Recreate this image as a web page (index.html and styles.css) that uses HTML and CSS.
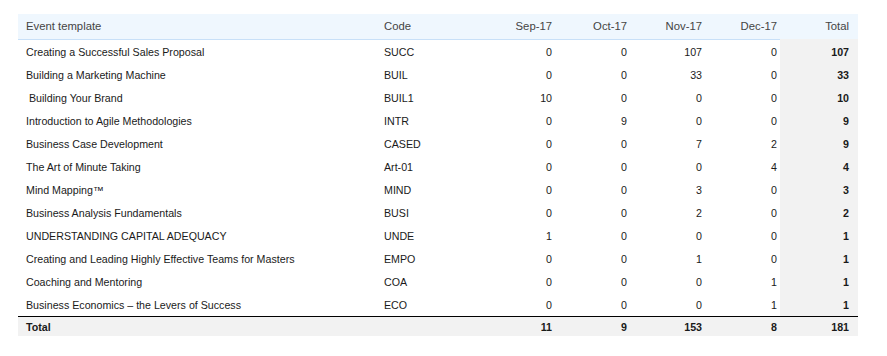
FILE: index.html
```html
<!DOCTYPE html>
<html lang="en">
<head>
    <meta charset="UTF-8">
    <title>Event template report</title>
    <link rel="stylesheet" href="styles.css">
</head>
<body>
    <div class="report">
        <table class="report-table">
            <colgroup>
                <col class="col-name">
                <col class="col-code">
                <col class="col-month">
                <col class="col-month">
                <col class="col-month">
                <col class="col-month">
                <col class="col-total">
            </colgroup>
            <thead>
                <tr>
                    <th class="name">Event template</th>
                    <th class="code">Code</th>
                    <th class="num">Sep-17</th>
                    <th class="num">Oct-17</th>
                    <th class="num">Nov-17</th>
                    <th class="num">Dec-17</th>
                    <th class="total">Total</th>
                </tr>
            </thead>
            <tbody>
                <tr><td class="name">Creating a Successful Sales Proposal</td><td class="code">SUCC</td><td class="num">0</td><td class="num">0</td><td class="num">107</td><td class="num">0</td><td class="total">107</td></tr>
                <tr><td class="name">Building a Marketing Machine</td><td class="code">BUIL</td><td class="num">0</td><td class="num">0</td><td class="num">33</td><td class="num">0</td><td class="total">33</td></tr>
                <tr><td class="name">&nbsp;Building Your Brand</td><td class="code">BUIL1</td><td class="num">10</td><td class="num">0</td><td class="num">0</td><td class="num">0</td><td class="total">10</td></tr>
                <tr><td class="name">Introduction to Agile Methodologies</td><td class="code">INTR</td><td class="num">0</td><td class="num">9</td><td class="num">0</td><td class="num">0</td><td class="total">9</td></tr>
                <tr><td class="name">Business Case Development</td><td class="code">CASED</td><td class="num">0</td><td class="num">0</td><td class="num">7</td><td class="num">2</td><td class="total">9</td></tr>
                <tr><td class="name">The Art of Minute Taking</td><td class="code">Art-01</td><td class="num">0</td><td class="num">0</td><td class="num">0</td><td class="num">4</td><td class="total">4</td></tr>
                <tr><td class="name">Mind Mapping™</td><td class="code">MIND</td><td class="num">0</td><td class="num">0</td><td class="num">3</td><td class="num">0</td><td class="total">3</td></tr>
                <tr><td class="name">Business Analysis Fundamentals</td><td class="code">BUSI</td><td class="num">0</td><td class="num">0</td><td class="num">2</td><td class="num">0</td><td class="total">2</td></tr>
                <tr><td class="name">UNDERSTANDING CAPITAL ADEQUACY</td><td class="code">UNDE</td><td class="num">1</td><td class="num">0</td><td class="num">0</td><td class="num">0</td><td class="total">1</td></tr>
                <tr><td class="name">Creating and Leading Highly Effective Teams for Masters</td><td class="code">EMPO</td><td class="num">0</td><td class="num">0</td><td class="num">1</td><td class="num">0</td><td class="total">1</td></tr>
                <tr><td class="name">Coaching and Mentoring</td><td class="code">COA</td><td class="num">0</td><td class="num">0</td><td class="num">0</td><td class="num">1</td><td class="total">1</td></tr>
                <tr><td class="name">Business Economics – the Levers of Success</td><td class="code">ECO</td><td class="num">0</td><td class="num">0</td><td class="num">0</td><td class="num">1</td><td class="total">1</td></tr>
            </tbody>
            <tfoot>
                <tr>
                    <td class="name">Total</td>
                    <td class="code"></td>
                    <td class="num">11</td>
                    <td class="num">9</td>
                    <td class="num">153</td>
                    <td class="num">8</td>
                    <td class="total">181</td>
                </tr>
            </tfoot>
        </table>
    </div>
</body>
</html>
```

FILE: styles.css
```css
body {
    font-family: "Liberation Sans", Arial, sans-serif;
    margin: 0;
    padding: 14px 18px;
    background-color: white;
    color: #1a1a1a;
}
.report-table {
    width: 840px;
    border-collapse: collapse;
    table-layout: fixed;
    font-size: 10.67px;
}
.col-name { width: 363px; }
.col-code { width: 99px; }
.col-month { width: 75px; }
.col-total { width: 78px; }
.report-table th,
.report-table td {
    padding: 5px 3px 3px;
    line-height: 15px;
    white-space: nowrap;
    text-align: left;
}
.report-table thead th {
    padding-top: 5px;
    padding-bottom: 5px;
    font-size: 11.3px;
    background-color: #eff7fe;
    color: #444;
    font-weight: normal;
    border-bottom: 1px solid #c8e0f8;
}
.report-table thead th.total {
    border-bottom-color: #f2f2f2;
}
.report-table .name {
    padding-left: 8px;
}
.report-table .num,
.report-table .total {
    text-align: right;
}
.report-table .total {
    padding-right: 9px;
    font-weight: bold;
}
.report-table thead th.total {
    font-weight: normal;
}
.report-table tbody .total {
    background-color: #f2f2f2;
}
.report-table tfoot td {
    padding-top: 4px;
    padding-bottom: 2px;
    line-height: 13px;
    font-weight: bold;
    background-color: #f2f2f2;
    border-top: 1px solid #000;
}
```
